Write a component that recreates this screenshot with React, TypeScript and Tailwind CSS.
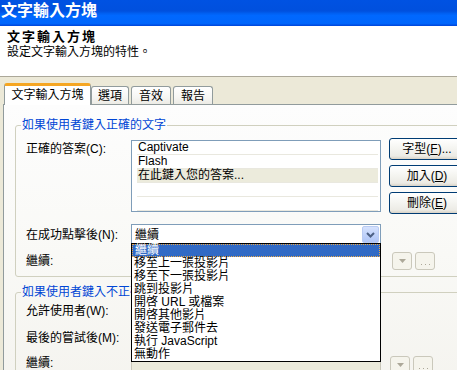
import React from 'react';

const dropdownItems = [
  '繼續',
  '移至上一張投影片',
  '移至下一張投影片',
  '跳到投影片',
  '開啓 URL 或檔案',
  '開啓其他影片',
  '發送電子郵件去',
  '執行 JavaScript',
  '無動作',
];

const answers = ['Captivate', 'Flash', '在此鍵入您的答案...', '', ''];

function XpButton({ children }: { children: React.ReactNode }) {
  return (
    <div className="w-[76px] h-[22px] flex items-center justify-center rounded-[3px] border border-[#003c74] bg-[linear-gradient(180deg,#ffffff_0%,#f5f5f1_45%,#ecebe5_85%,#d8d2c6_100%)] text-black leading-[14px]">
      {children}
    </div>
  );
}

function SmallButtons({ gap }: { gap: string }) {
  return (
    <div className={`flex gap-[3px] ${gap}`}>
      <div className="w-[20px] h-[18px] flex items-center justify-center rounded-[3px] border border-[#cac8bb] bg-[#f5f4ec]">
        <svg width="7" height="4" viewBox="0 0 7 4">
          <path d="M0 0h7L3.5 4z" fill="#aca899" />
        </svg>
      </div>
      <div className="w-[20px] h-[18px] flex items-end justify-center pb-[3px] rounded-[3px] border border-[#cac8bb] bg-[#f5f4ec]">
        <svg width="9" height="2" viewBox="0 0 9 2">
          <rect x="0" y="0" width="1" height="1" fill="#aca899" />
          <rect x="4" y="0" width="1" height="1" fill="#aca899" />
          <rect x="8" y="0" width="1" height="1" fill="#aca899" />
        </svg>
      </div>
    </div>
  );
}

function GroupBox({ title, children }: { title: string; children: React.ReactNode }) {
  return (
    <fieldset className="w-[520px] border border-[#d0d0bf] rounded-[3px]">
      <legend className="ml-[5px] px-[1px] text-[#0046d5] leading-[14px]">{title}</legend>
      <div className="pl-[10px] pb-[6px]">{children}</div>
    </fieldset>
  );
}

export default function App() {
  return (
    <div className="relative w-[457px] h-[370px] overflow-hidden bg-[#ece9d8] text-[12px] text-black font-['Liberation_Sans','Noto_Sans_CJK_TC',sans-serif]">
      {/* Title bar */}
      <div className="h-[26px] bg-[linear-gradient(180deg,#0052e2_0%,#0050de_42%,#0060f2_52%,#0068ff_60%,#0066fc_90%,#0044d8_100%)] text-white font-bold text-[16px] leading-[22px] pl-[1px]">
        文字輸入方塊
      </div>

      {/* Header */}
      <div className="h-[51px] bg-white border-b border-[#aca899] pl-[7px] pt-[3px]">
        <div className="font-bold text-[13px] leading-[16px] tracking-[2px]">文字輸入方塊</div>
        <div className="leading-[14px]">設定文字輸入方塊的特性。</div>
      </div>

      {/* Tabs */}
      <div className="pl-[3px] pt-[6px]">
        <div className="flex items-end pl-[1px] -mb-px relative z-10">
          <div className="w-[87px] h-[22px] bg-white border-t-[3px] border-t-[#f5a623] border-x border-x-[#919b9c] rounded-t-[3px] flex items-center justify-center pb-[1px]">
            文字輸入方塊
          </div>
          <div className="w-[38px] h-[18px] mb-px border-t border-x border-[#919b9c] rounded-t-[3px] bg-[linear-gradient(180deg,#ffffff_0%,#f6f6f3_60%,#ecebe5_100%)] flex items-center justify-center">
            選項
          </div>
          <div className="w-[40px] h-[18px] mb-px ml-[2px] border-t border-x border-[#919b9c] rounded-t-[3px] bg-[linear-gradient(180deg,#ffffff_0%,#f6f6f3_60%,#ecebe5_100%)] flex items-center justify-center">
            音效
          </div>
          <div className="w-[40px] h-[18px] mb-px ml-[2px] border-t border-x border-[#919b9c] rounded-t-[3px] bg-[linear-gradient(180deg,#ffffff_0%,#f6f6f3_60%,#ecebe5_100%)] flex items-center justify-center">
            報告
          </div>
        </div>

        {/* Tab panel */}
        <div className="w-[540px] h-[300px] border-t border-l border-[#919b9c] bg-[linear-gradient(180deg,#fdfdfd_0%,#f9f9f6_50%,#f4f3ee_100%)] pl-[11px] pt-[13px]">
          <GroupBox title="如果使用者鍵入正確的文字">
            <div className="flex mt-[8px]">
              <div className="w-[105px] pt-[2px] leading-[14px]">正確的答案(C):</div>
              <div className="w-[250px] h-[72px] border border-[#7f9db9] bg-white pl-[5px] pr-[2px]">
                {answers.map((a, i) => (
                  <div
                    key={i}
                    className={`h-[14px] leading-[13px] border-b border-[#e9e8df] pl-[1px] ${i === 2 ? 'bg-[#ecebdc]' : ''}`}
                  >
                    {a}
                  </div>
                ))}
              </div>
              <div className="ml-[8px] -mt-[2px] flex flex-col gap-[5px]">
                <XpButton>
                  字型(<u>F</u>)...
                </XpButton>
                <XpButton>
                  加入(<u>D</u>)
                </XpButton>
                <XpButton>
                  刪除(<u>E</u>)
                </XpButton>
              </div>
            </div>

            <div className="flex items-center mt-[10px] h-[21px]">
              <div className="w-[105px]">在成功點擊後(N):</div>
              <div className="w-[250px] h-[21px] border border-[#7f9db9] bg-white flex items-center pr-[1px]">
                <div className="flex-1 pl-[3px]">繼續</div>
                <div className="w-[17px] h-[17px] rounded-[2px] border border-[#b9cbf3] bg-[linear-gradient(180deg,#d6e2fd_0%,#c1d3fb_50%,#afc5f6_100%)] flex items-center justify-center">
                  <svg width="9" height="6" viewBox="0 0 9 6">
                    <path d="M1 1l3.5 3.5L8 1" fill="none" stroke="#4d6185" strokeWidth="2" />
                  </svg>
                </div>
              </div>
            </div>

            <div className="flex items-center mt-[7px] h-[18px]">
              <div className="w-[105px]">繼續:</div>
              <div className="w-[250px] h-[18px] border border-[#c9c7ba] bg-[#ebeadb]" />
              <SmallButtons gap="ml-[11px]" />
            </div>
          </GroupBox>

          <div className="mt-[8px]">
            <GroupBox title="如果使用者鍵入不正確的文字">
              <div className="flex items-center mt-[2px] h-[20px]">
                <div className="w-[105px]">允許使用者(W):</div>
                <div className="w-[60px] h-[20px] border border-[#7f9db9] bg-white" />
              </div>
              <div className="flex items-center mt-[7px] h-[20px]">
                <div className="w-[105px]">最後的嘗試後(M):</div>
                <div className="w-[250px] h-[20px] border border-[#7f9db9] bg-white" />
              </div>
              <div className="flex items-start mt-[6px] h-[20px]">
                <div className="w-[105px] leading-[18px]">繼續:</div>
                <div className="w-[250px] h-[20px] border border-[#c9c7ba] bg-[#ebeadb]" />
                <div className="mt-[2px]">
                  <SmallButtons gap="ml-[9px]" />
                </div>
              </div>
            </GroupBox>
          </div>
        </div>
      </div>

      {/* Open dropdown list */}
      <div className="absolute left-[131px] top-[243px] w-[250px] h-[119px] border border-black bg-white z-20">
        {dropdownItems.map((item, i) => (
          <div
            key={item}
            className={`h-[13px] leading-[13px] pl-[2px] whitespace-nowrap ${
              i === 0 ? 'bg-[#316ac5] text-white border border-dotted border-[#e8a848] pl-[1px]' : ''
            }`}
          >
            <span className={i === 0 ? 'relative -top-[1px]' : ''}>{item}</span>
          </div>
        ))}
      </div>
    </div>
  );
}
